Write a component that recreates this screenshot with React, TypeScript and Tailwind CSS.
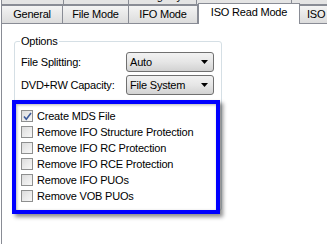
import type { ReactNode } from "react";

const topTabs = [
  { label: "I/O", w: "w-[63px]" },
  { label: "Events", w: "w-[65px]" },
  { label: "Registry", w: "w-[68px]" },
  { label: "Sounds", w: "w-[95px]" },
  { label: "Stream Processing", w: "w-[110px]" },
];

const options = [
  { label: "Create MDS File", checked: true },
  { label: "Remove IFO Structure Protection", checked: false },
  { label: "Remove IFO RC Protection", checked: false },
  { label: "Remove IFO RCE Protection", checked: false },
  { label: "Remove IFO PUOs", checked: false },
  { label: "Remove VOB PUOs", checked: false },
];

function Tab({ children, width, first }: { children: ReactNode; width: string; first?: boolean }) {
  return (
    <div
      className={`${width} ${first ? "border-l" : ""} h-full shrink-0 overflow-hidden whitespace-nowrap border-t border-r border-[#898c95] bg-gradient-to-b from-[#f4f4f4] to-[#dcdcdc] text-center leading-[17px]`}
    >
      {children}
    </div>
  );
}

function Combo({ value }: { value: string }) {
  return (
    <div className="flex h-[20px] w-[88px] items-center justify-between rounded-[3px] border border-[#707070] bg-gradient-to-b from-[#f2f2f2] via-[#e6e6e6] to-[#d2d2d2] pl-[3px] pr-[5px]">
      <span>{value}</span>
      <svg width="7" height="4" viewBox="0 0 7 4">
        <path d="M0 0h7L3.5 4z" fill="#000" />
      </svg>
    </div>
  );
}

function Check({ checked }: { checked: boolean }) {
  return (
    <div className="flex h-[12px] w-[12px] shrink-0 items-center justify-center border border-[#8e8f8f] bg-gradient-to-br from-[#dcdcdc] to-[#f8f8f8]">
      {checked && (
        <svg width="9" height="9" viewBox="0 0 9 9">
          <path d="M1 4.5l2.3 2.8L8 1" fill="none" stroke="#3c5a9a" strokeWidth="1.6" />
        </svg>
      )}
    </div>
  );
}

export default function App() {
  return (
    <div className="relative h-[244px] w-[327px] overflow-hidden bg-white pl-[1px] font-['Liberation_Sans',Arial,sans-serif] text-[11px] tracking-[-0.2px] text-black">
      {/* first row of tabs, mostly scrolled out of view */}
      <div className="flex h-[5px] overflow-hidden">
        {topTabs.map((t, i) => (
          <div
            key={t.label}
            className={`${t.w} ${i === 0 ? "border-l" : ""} shrink-0 whitespace-nowrap border-r border-b border-[#898c95] bg-[#e4e4e4] text-center`}
          >
            <div className="-mt-[10px] leading-[13px]">{t.label}</div>
          </div>
        ))}
      </div>

      {/* second row of tabs */}
      <div className="flex h-[18px] items-end">
        <Tab width="w-[62px]" first>General</Tab>
        <Tab width="w-[66px]">File Mode</Tab>
        <Tab width="w-[69px]">IFO Mode</Tab>
        <div className="relative z-10 -mt-[2px] -mb-[1px] h-[21px] w-[102px] shrink-0 self-start whitespace-nowrap border border-b-0 border-[#898c95] bg-white text-center leading-[16px]">
          ISO Read Mode
        </div>
        <div className="h-full w-[60px] shrink-0 overflow-hidden whitespace-nowrap border-t border-r border-[#898c95] bg-gradient-to-b from-[#f4f4f4] to-[#dcdcdc] pl-[7px] leading-[17px]">
          ISO Write Mode
        </div>
      </div>

      {/* panel */}
      <div className="h-[221px] border-t border-l border-[#898c95] pt-[17px] pl-[12px]">
        <div className="flex h-[170px] w-[208px] flex-col rounded-[3px] border border-[#d5dfe5] pl-[6px] pr-[7px]">
          <span className="-mt-[7px] ml-[-1px] w-fit bg-white px-[1px] leading-[13px]">Options</span>

          <div className="mt-[4px] flex items-center justify-between">
            <span>File Splitting:</span>
            <Combo value="Auto" />
          </div>
          <div className="mt-[3px] flex items-center justify-between">
            <span>DVD+RW Capacity:</span>
            <Combo value="File System" />
          </div>

          <div className="mt-[13px] flex flex-col">
            {options.map((o) => (
              <div key={o.label} className="flex h-[16px] items-center gap-[4px] whitespace-nowrap">
                <Check checked={o.checked} />
                <span>{o.label}</span>
              </div>
            ))}
          </div>
        </div>
      </div>

      {/* blue annotation frame */}
      <div className="absolute left-[12px] top-[100px] h-[114px] w-[208px] border-[4px] border-[#0000ff] shadow-[3px_3px_4px_rgba(0,0,0,0.45),inset_1px_1px_3px_rgba(0,0,0,0.3)]" />
    </div>
  );
}
